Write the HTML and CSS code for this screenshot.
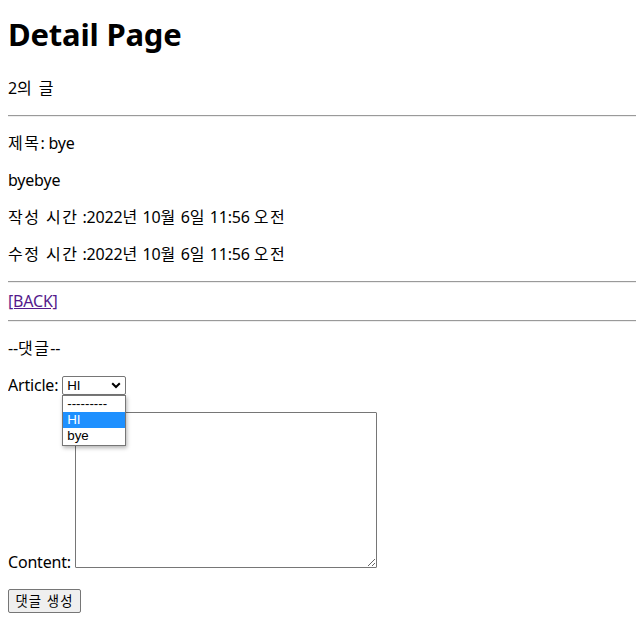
FILE: index.html
```html
<!DOCTYPE html>
<html lang="ko">
<head>
<meta charset="utf-8">
<title>Detail Page</title>
<link rel="stylesheet" href="styles.css">
</head>
<body>
<h1 class="title">Detail Page</h1>
<p class="line">2<span class="ko">의 글</span></p>
<hr class="rule">
<p class="line"><span class="ko">제목</span>: bye</p>
<p class="line">byebye</p>
<p class="line"><span class="ko">작성 시간</span> :2022<span class="ko">년</span> 10<span class="ko">월</span> 6<span class="ko">일</span> 11:56 <span class="ko">오전</span></p>
<p class="line"><span class="ko">수정 시간</span> :2022<span class="ko">년</span> 10<span class="ko">월</span> 6<span class="ko">일</span> 11:56 <span class="ko">오전</span></p>
<hr class="rule">
<a class="back" href="#">[BACK]</a>
<hr class="rule">
<p class="line">--<span class="ko">댓글</span>--</p>
<form class="comment-form">
  <p class="line field">
    <label class="label">Article:</label>
    <span class="select">
      <span class="select-value">HI</span>
      <svg class="chevron" width="10" height="7" viewBox="0 0 10 7"><path d="M1.2 1.2 L5 5 L8.8 1.2" fill="none" stroke="#000" stroke-width="2"/></svg>
      <span class="dropdown">
        <span class="option">---------</span>
        <span class="option selected">HI</span>
        <span class="option">bye</span>
      </span>
    </span>
  </p>
  <p class="line field">
    <label class="label">Content:</label>
    <textarea class="textarea"></textarea>
  </p>
  <button class="button" type="button">댓글 생성</button>
</form>
</body>
</html>
```
FILE: styles.css
```css
html, body {
  background: #fff;
}
body {
  margin: 0 0 8px 8px;
  padding: 0;
  font-family: "Noto Sans", "Noto Sans CJK KR", sans-serif;
  font-size: 16px;
  line-height: 21px;
  letter-spacing: -0.2px;
  color: #000;
}
.ko {
  letter-spacing: 1.5px;
}
.title {
  font-family: "Noto Sans", "Noto Sans CJK KR", sans-serif;
  font-size: 31px;
  font-weight: 700;
  line-height: 27px;
  letter-spacing: -0.2px;
  padding-bottom: 8px;
  margin: 21.44px 0;
}
.line {
  margin: 16px 0;
}
.rule {
  margin: 8px 0;
  border: none;
  border-top: 1px solid #9a9a9a;
  border-bottom: 1px solid #eeeeee;
  height: 0;
}
.back {
  display: block;
  color: #551a8b;
  text-decoration: underline;
}
.select {
  position: relative;
  display: inline-flex;
  align-items: center;
  justify-content: space-between;
  box-sizing: border-box;
  width: 64px;
  height: 19px;
  padding: 0 4px 0 4px;
  border: 1px solid #767676;
  border-radius: 2px;
  font-family: "Liberation Sans", sans-serif;
  font-size: 13.33px;
  letter-spacing: 0;
  line-height: 16px;
  vertical-align: 1px;
  background: #fff;
}
.chevron {
  display: block;
}
.dropdown {
  position: absolute;
  left: -1px;
  top: 18px;
  width: 64px;
  box-sizing: border-box;
  border: 1px solid #767676;
  background: #fff;
  display: flex;
  flex-direction: column;
  padding-bottom: 1px;
  box-shadow: 1px 2px 4px rgba(0,0,0,0.3);
  z-index: 5;
}
.option {
  display: block;
  height: 16px;
  line-height: 16px;
  padding: 0 4px;
  font-size: 13.33px;
}
.option.selected {
  background: #1e90ff;
  color: #fff;
}
.textarea {
  box-sizing: border-box;
  width: 302px;
  height: 156px;
  border: 1px solid #767676;
  border-radius: 1px;
  padding: 2px;
  vertical-align: baseline;
  margin: 0;
  resize: both;
  font-family: "Liberation Mono", monospace;
  font-size: 13.33px;
}
.button {
  box-sizing: border-box;
  width: 73px;
  height: 24px;
  padding: 1px 6px;
  border: 1px solid #767676;
  border-radius: 2px;
  background: #efefef;
  font-family: "Noto Sans CJK KR", sans-serif;
  font-size: 13.33px;
  letter-spacing: 1px;
  color: #000;
}
```
